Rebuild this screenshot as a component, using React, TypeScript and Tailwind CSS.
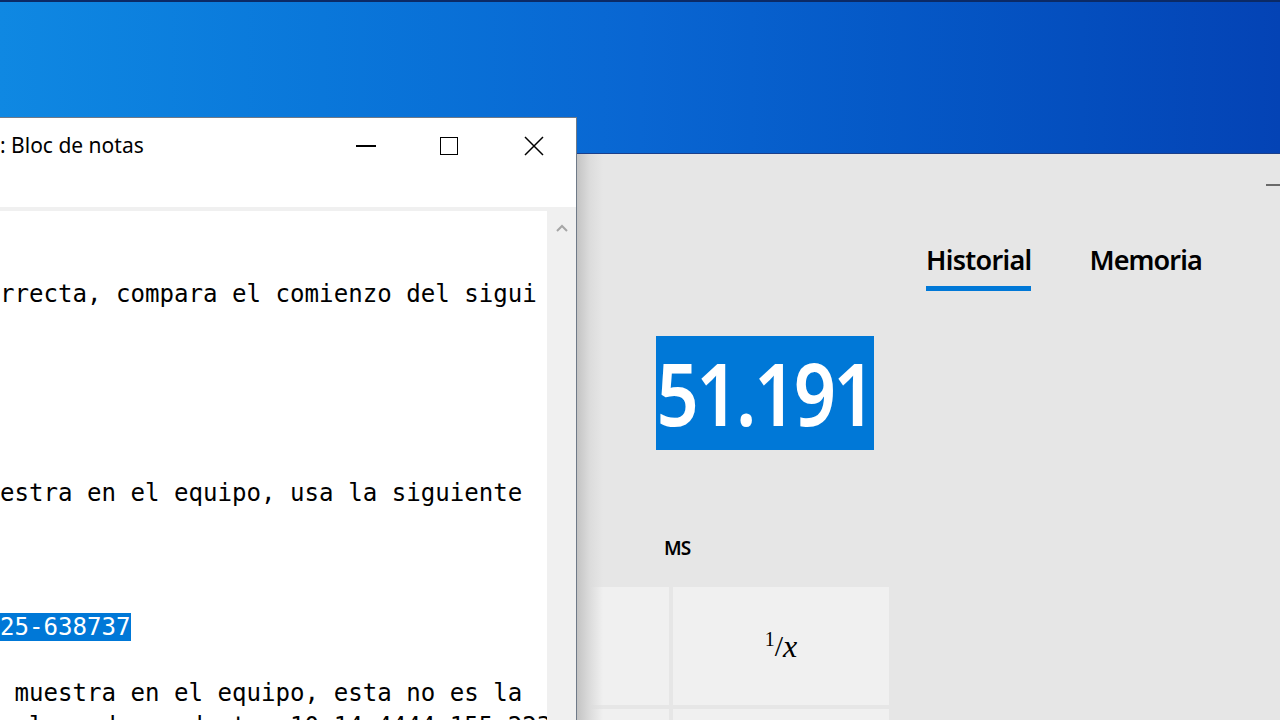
import React from 'react';

const notepadLines: { text: string; selected?: boolean }[] = [
  { text: '' },
  { text: '' },
  { text: 'rrecta, compara el comienzo del sigui' },
  { text: '' },
  { text: '' },
  { text: '' },
  { text: '' },
  { text: '' },
  { text: 'estra en el equipo, usa la siguiente' },
  { text: '' },
  { text: '' },
  { text: '' },
  { text: '25-638737', selected: true },
  { text: '' },
  { text: ' muestra en el equipo, esta no es la' },
  { text: ' clave de producto: 10-14-4444-155-2235' },
];

const Notepad: React.FC = () => {
  return (
    <div className="absolute left-0 top-[117px] w-[577px] h-[603px] bg-white border-t border-r border-[#6f7a88] flex flex-col">
      {/* title bar */}
      <div className="h-[56px] flex items-center justify-between shrink-0">
        <span className="text-[21px] text-black font-['Noto_Sans',sans-serif]">: Bloc de notas</span>
        <div className="flex h-full">
          <div className="w-[85px] h-full flex items-center justify-center">
            <div className="w-[20px] h-[1.5px] bg-black ml-[4px]" />
          </div>
          <div className="w-[85px] h-full flex items-center justify-center">
            <div className="w-[18px] h-[18px] border-[1.5px] border-black" />
          </div>
          <div className="w-[85px] h-full flex items-center justify-center">
            <svg width="20" height="20" viewBox="0 0 20 20">
              <path d="M1 1 L19 19 M19 1 L1 19" stroke="#000" strokeWidth="1.5" />
            </svg>
          </div>
        </div>
      </div>
      {/* menu bar (blank) */}
      <div className="h-[33px] shrink-0" />
      <div className="h-[4px] bg-[#f0f0f0] shrink-0" />
      {/* text area */}
      <div className="flex flex-1 min-h-0">
        <div className="flex-1 overflow-hidden font-['DejaVu_Sans_Mono',monospace] text-[24.1px] leading-[33.3px] text-black whitespace-pre">
          {notepadLines.map((line, i) => (
            <div key={i} className="h-[33.3px]">
              {line.selected ? (
                <span className="bg-[#0078d7] text-white">{line.text}</span>
              ) : (
                line.text
              )}
            </div>
          ))}
        </div>
        <div className="w-[29px] bg-[#f0f0f0] flex flex-col items-center">
          <div className="h-[33px] flex items-center justify-center">
            <svg width="12" height="8" viewBox="0 0 12 8">
              <path d="M1 7 L6 2 L11 7" stroke="#a6a6a6" strokeWidth="2" fill="none" />
            </svg>
          </div>
        </div>
      </div>
    </div>
  );
};

const Calculator: React.FC = () => {
  return (
    <div className="absolute left-[577px] top-[153px] right-0 bottom-0 bg-[#e6e6e6] border-t border-[#1b3f8a] font-['Noto_Sans',sans-serif]">
      {/* shadow cast by notepad */}
      <div className="absolute left-0 top-0 bottom-0 w-[26px] bg-gradient-to-r from-[#c4c4c4] via-[#dcdcdc] to-transparent" />
      <div className="absolute right-0 top-[30px] w-[14px] h-[1.5px] bg-[#6a6a6a]" />
      <div className="flex h-full">
        {/* calculator column */}
        <div className="w-[349px] shrink-0 flex flex-col">
          <div className="pt-[182px] pl-[79px]">
            <div className="w-[218px] h-[114px] bg-[#0078d7] flex items-center justify-center">
              <span className="text-white font-semibold text-[86px] leading-none tracking-[-3px] inline-block scale-x-[0.86]">51.191</span>
            </div>
          </div>
          <div className="mt-[84px] h-[30px] pl-[87px] flex items-center">
            <span className="text-[19px] font-semibold text-black tracking-[-1px]">MS</span>
          </div>
          <div className="mt-[24px] flex flex-col gap-[4px]">
            <div className="flex gap-[4px]">
              <div className="ml-[10px] w-[82px] h-[118px] bg-[#f0f0f0]" />
              <div className="w-[216px] h-[118px] bg-[#f0f0f0] flex items-center justify-center font-['Liberation_Serif',serif] text-black">
                <span className="text-[20px] leading-none relative top-[-7px]">1</span>
                <span className="text-[30px] leading-none">/</span>
                <span className="text-[32px] leading-none italic">x</span>
              </div>
            </div>
            <div className="flex gap-[4px]">
              <div className="ml-[10px] w-[82px] h-[118px] bg-[#f0f0f0]" />
              <div className="w-[216px] h-[118px] bg-[#f0f0f0]" />
            </div>
          </div>
        </div>
        {/* history / memory panel */}
        <div className="flex-1 pt-[87px]">
          <div className="flex gap-[58px] items-start">
            <div className="flex flex-col">
              <span className="text-[27px] font-semibold text-black leading-[38px] tracking-[-0.7px]">Historial</span>
              <div className="mt-[7px] h-[5px] bg-[#0078d7]" />
            </div>
            <span className="text-[27px] font-semibold text-black leading-[38px] tracking-[-0.9px]">Memoria</span>
          </div>
        </div>
      </div>
    </div>
  );
};

export default function App() {
  return (
    <div className="relative w-[1280px] h-[720px] overflow-hidden bg-gradient-to-r from-[#0f88e2] via-[#0966d2] to-[#0443b5]">
      <div className="absolute inset-x-0 top-0 h-[2px] bg-[#0b2a66]" />
      <Calculator />
      <Notepad />
    </div>
  );
}
